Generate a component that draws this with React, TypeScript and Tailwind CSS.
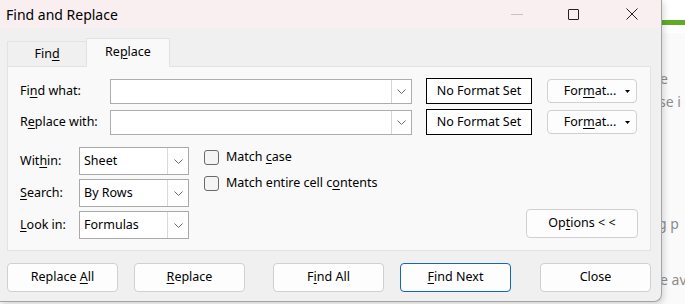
import React from 'react';

function U({ children }: { children: React.ReactNode }) {
  return <span className="underline underline-offset-[2px] decoration-1">{children}</span>;
}

function Chevron() {
  return (
    <svg width="9" height="5" viewBox="0 0 9 5" fill="none">
      <path d="M0.5 0.5 L4.5 4.5 L8.5 0.5" stroke="#6b6b6b" strokeWidth="1" />
    </svg>
  );
}

function Btn({ children, className = '' }: { children: React.ReactNode; className?: string }) {
  return (
    <div
      className={`flex items-center justify-center rounded-[4px] border bg-[#fdfdfd] text-[12.5px] text-black ${className}`}
    >
      <span className="whitespace-pre">{children}</span>
    </div>
  );
}

function Select({ value }: { value: string }) {
  return (
    <div className="flex h-[28px] w-[110px] border border-[#a9a9a9] bg-white">
      <div className="flex flex-1 items-center pl-[4px] text-[12.5px]">{value}</div>
      <div className="flex w-[21px] items-center justify-center border-l border-[#d9d9d9]">
        <Chevron />
      </div>
    </div>
  );
}

function FieldRow({ label, className = '' }: { label: React.ReactNode; className?: string }) {
  return (
    <div className={`flex h-[26px] items-center ${className}`}>
      <div className="w-[90px] text-[12.5px]">{label}</div>
      <div className="flex h-[25px] w-[302px] border border-[#adadad] bg-white">
        <div className="flex-1" />
        <div className="flex w-[20px] items-center justify-center border-l border-[#d5d5d5]">
          <Chevron />
        </div>
      </div>
      <div className="ml-[14px] flex h-[26px] w-[106px] items-center justify-center border border-black bg-white text-[12.5px]">
        No Format Set
      </div>
      <div className="ml-[15px] flex h-[24px] w-[90px] items-center justify-center rounded-[4px] border border-[#d0d0d0] bg-[#fdfdfd] text-[12.5px]">
        <span className="ml-[10px]">
          For<U>m</U>at...
        </span>
        <svg width="5" height="3" viewBox="0 0 5 3" className="ml-[9px]">
          <path d="M0 0 H5 L2.5 3 Z" fill="#000" />
        </svg>
      </div>
    </div>
  );
}

function Check({ label }: { label: React.ReactNode }) {
  return (
    <div className="flex h-[16px] items-center">
      <div className="h-[15px] w-[15px] rounded-[3px] border border-[#6a6a6a] bg-[#f4f4f4]" />
      <span className="ml-[7px] text-[12.5px]">{label}</span>
    </div>
  );
}

export default function App() {
  return (
    <div className="flex h-[304px] w-[685px] overflow-hidden bg-[#f7f7f7] font-['Noto_Sans',sans-serif] text-black">
      <div className="relative z-10 flex h-[302px] w-[662px] shrink-0 flex-col rounded-br-[8px] border-b border-r border-[#a3a3a3] bg-[#f0f0f0] shadow-[2px_2px_6px_rgba(0,0,0,0.15)]">
        {/* title bar */}
        <div className="flex h-[28px] items-center bg-[#f9eff0]">
          <span className="ml-[6px] text-[14px]">Find and Replace</span>
          <div className="ml-auto flex items-center">
            <div className="h-px w-[12px] bg-[#c4c4c4]" />
            <div className="ml-[45px] h-[11px] w-[11px] rounded-[1px] border border-[#222]" />
            <svg width="12" height="12" viewBox="0 0 12 12" className="ml-[47px] mr-[23px]">
              <path d="M0.5 0.5 L11.5 11.5 M11.5 0.5 L0.5 11.5" stroke="#222" strokeWidth="1" />
            </svg>
          </div>
        </div>

        {/* tabs */}
        <div className="ml-[7px] mt-[10px] flex h-[28px] items-end">
          <div className="flex h-[25px] w-[79px] items-center justify-center border-l border-t border-[#e3e3e3] text-[12.5px]">
            <span>
              Fin<U>d</U>
            </span>
          </div>
          <div className="relative z-10 -mb-px flex h-[29px] w-[84px] items-center justify-center border-x border-t border-[#e3e3e3] bg-[#f9f9f9] pb-px text-[12.5px]">
            <span>
              Re<U>p</U>lace
            </span>
          </div>
        </div>

        {/* panel */}
        <div className="ml-[7px] h-[185px] w-[644px] border border-[#e3e3e3] bg-[#f9f9f9] px-[12px] pt-[11px]">
          <FieldRow
            label={
              <>
                Fi<U>n</U>d what:
              </>
            }
          />
          <FieldRow
            className="mt-[5px]"
            label={
              <>
                R<U>e</U>place with:
              </>
            }
          />

          <div className="mt-[12px] flex">
            <div className="flex flex-col gap-[4px]">
              <div className="flex items-center">
                <div className="w-[59px] text-[12.5px]">
                  Wit<U>h</U>in:
                </div>
                <Select value="Sheet" />
              </div>
              <div className="flex items-center">
                <div className="w-[59px] text-[12.5px]">
                  <U>S</U>earch:
                </div>
                <Select value="By Rows" />
              </div>
              <div className="flex items-center">
                <div className="w-[59px] text-[12.5px]">
                  <U>L</U>ook in:
                </div>
                <Select value="Formulas" />
              </div>
            </div>

            <div className="ml-[15px] flex flex-col gap-[10px] pt-[2px]">
              <Check
                label={
                  <>
                    Match <U>c</U>ase
                  </>
                }
              />
              <Check
                label={
                  <>
                    Match entire cell c<U>o</U>ntents
                  </>
                }
              />
            </div>

            <div className="flex flex-1 items-end justify-end pb-[1px]">
              <Btn className="h-[29px] w-[112px] border-[#d0d0d0]">
                Op<U>t</U>ions {'<'} {'<'}
              </Btn>
            </div>
          </div>
        </div>

        {/* buttons */}
        <div className="ml-[7px] mt-[12px] flex">
          <Btn className="h-[29px] w-[111px] border-[#d0d0d0]">
            Replace <U>A</U>ll
          </Btn>
          <Btn className="ml-[16px] h-[29px] w-[111px] border-[#d0d0d0]">
            <U>R</U>eplace
          </Btn>
          <Btn className="ml-[28px] h-[29px] w-[111px] border-[#d0d0d0]">
            F<U>i</U>nd All
          </Btn>
          <Btn className="ml-[16px] h-[29px] w-[111px] border-[#1466b8]">
            <U>F</U>ind Next
          </Btn>
          <Btn className="ml-[29px] h-[29px] w-[111px] border-[#d0d0d0]">
            Close
          </Btn>
        </div>
      </div>

      {/* page behind the dialog */}
      <div className="flex flex-1 flex-col overflow-hidden bg-[#fafafa] text-[14px] leading-none text-[#8c8c8c]">
        <div className="h-[20px] bg-white" />
        <div className="h-[5px] bg-[#62aa26]" />
        <div className="h-[8px] bg-white" />
        <div className="ml-[-2px] mt-[39px] whitespace-nowrap">e</div>
        <div className="ml-[-3px] mt-[9px] whitespace-nowrap">se i</div>
        <div className="ml-[-4px] mt-[108px] whitespace-nowrap">g p</div>
        <div className="ml-[-2px] mt-[42px] whitespace-nowrap">e av</div>
      </div>
    </div>
  );
}
